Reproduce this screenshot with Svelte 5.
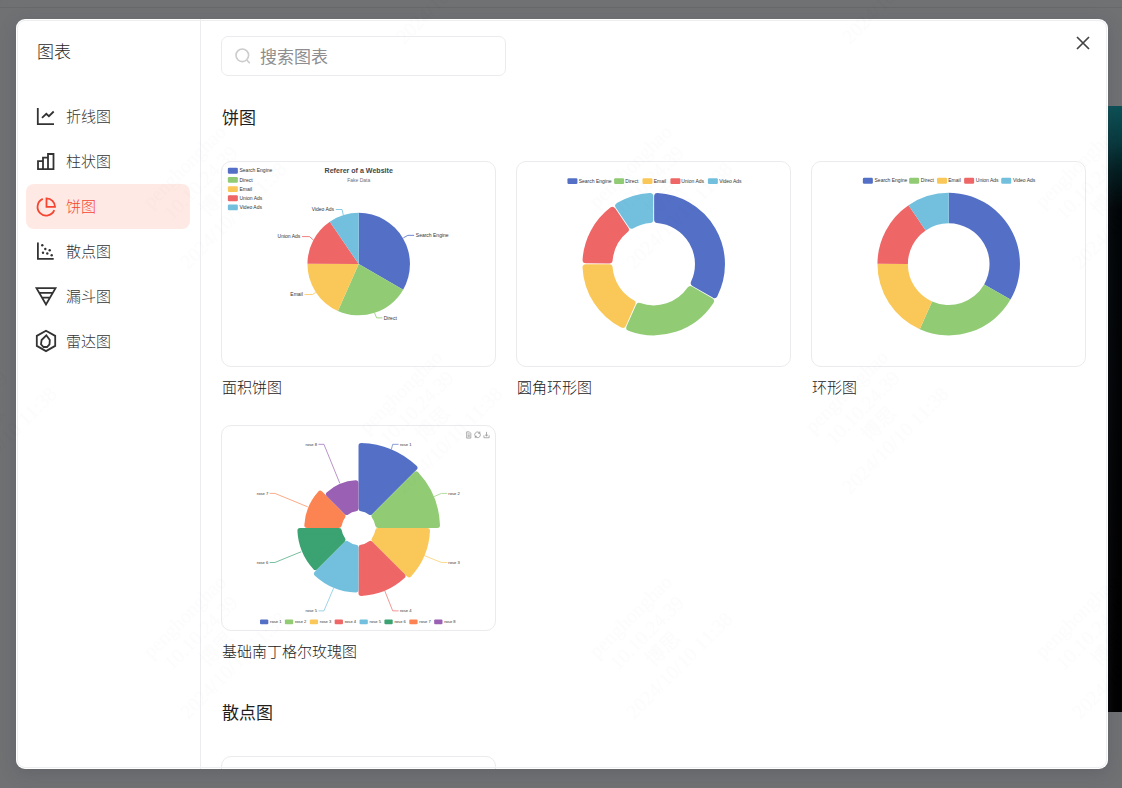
<script lang="ts">
  type Point = [number, number];
  type Label = { text: string; x: number; y: number; end?: boolean; line: string; color: string };
  type Legend = { text: string; x: number; y: number; tx: number; color: string };

  const palette = ['#5470c6', '#91cc75', '#fac858', '#ee6666', '#73c0de', '#3ba272', '#fc8452', '#9a60b4'];
  const sources = ['Search Engine', 'Direct', 'Email', 'Union Ads', 'Video Ads'];
  const visits = [1048, 735, 580, 484, 300];
  const roseRadii = [246, 236, 207, 197, 187, 177, 157, 138];

  const menu = [
    { id: 'line', name: '折线图' },
    { id: 'bar', name: '柱状图' },
    { id: 'pie', name: '饼图' },
    { id: 'scatter', name: '散点图' },
    { id: 'funnel', name: '漏斗图' },
    { id: 'radar', name: '雷达图' }
  ];

  let active = $state('pie');
  let keyword = $state('');
  let open = $state(true);

  // Sector outline. `pad` pulls every edge inwards; a round stroke of the same
  // colour fills part of it again, which leaves rounded corners.
  function sector(cx: number, cy: number, r: number, R: number, from: number, to: number, pad = 0) {
    const outer = R - pad;
    const inner = r > 0 ? r + pad : 0;
    const at = (radius: number, angle: number): Point => [
      cx + radius * Math.sin(angle),
      cy - radius * Math.cos(angle)
    ];
    const dOut = Math.asin(pad / outer);
    const dIn = inner > 0 ? Math.asin(pad / inner) : 0;
    const large = to - from > Math.PI ? 1 : 0;
    const p1 = at(outer, from + dOut);
    const p2 = at(outer, to - dOut);
    const p3 = at(inner, to - dIn);
    const p4 = at(inner, from + dIn);
    const back = inner > 0 ? `L${p3} A${inner},${inner} 0 ${large} 0 ${p4}` : `L${cx},${cy}`;
    return `M${p1} A${outer},${outer} 0 ${large} 1 ${p2} ${back}Z`;
  }

  function pieSlices(r: number, R: number, pad = 0) {
    const total = visits.reduce((a, b) => a + b, 0);
    let angle = 0;
    return visits.map((value, i) => {
      const from = angle;
      angle += (value / total) * Math.PI * 2;
      return { d: sector(328, 245, r, R, from, angle, pad), color: palette[i] };
    });
  }

  function rowLegend(xs: number[], texts: number[], y: number): Legend[] {
    return sources.map((text, i) => ({ text, x: xs[i], tx: texts[i], y, color: palette[i] }));
  }

  const pieLabels: Label[] = [
    { text: 'Search Engine', x: 465, y: 176, line: '435,182 446,176 461,176', color: palette[0] },
    { text: 'Direct', x: 388, y: 374, line: '366,362 371,374 385,374', color: palette[1] },
    { text: 'Email', x: 194, y: 318, end: true, line: '225,313 217,318 198,318', color: palette[2] },
    { text: 'Union Ads', x: 188, y: 179, end: true, line: '219,187 210,179 192,179', color: palette[3] },
    { text: 'Video Ads', x: 269, y: 114, end: true, line: '291,127 288,114 273,114', color: palette[4] }
  ];

  const roseLabels: Label[] = [
    { text: 'rose 1', x: 515, y: 53, line: '490,68 494,53 511,53', color: palette[0] },
    { text: 'rose 2', x: 655, y: 195, line: '612,205 635,195 652,195', color: palette[1] },
    { text: 'rose 3', x: 655, y: 395, line: '585,375 635,395 652,395', color: palette[2] },
    { text: 'rose 4', x: 515, y: 535, line: '471,477 494,535 511,535', color: palette[3] },
    { text: 'rose 5', x: 275, y: 535, end: true, line: '323,469 295,535 279,535', color: palette[4] },
    { text: 'rose 6', x: 134, y: 395, end: true, line: '229,364 153,395 138,395', color: palette[5] },
    { text: 'rose 7', x: 134, y: 195, end: true, line: '248,234 153,195 138,195', color: palette[6] },
    { text: 'rose 8', x: 275, y: 53, end: true, line: '341,166 295,53 279,53', color: palette[7] }
  ];

  const charts = [
    {
      name: '面积饼图',
      viewBox: '0 0 655 490',
      title: true,
      slices: pieSlices(0, 123),
      round: 0,
      legend: sources.map((text, i): Legend => ({ text, x: 14, tx: 42, y: 21 + i * 22, color: palette[i] })),
      labels: pieLabels
    },
    {
      name: '圆角环形图',
      viewBox: '0 0 655 490',
      slices: pieSlices(98, 172, 9),
      round: 16,
      legend: rowLegend([121, 233, 301, 368, 458], [148, 260, 328, 394, 485], 46),
      labels: []
    },
    {
      name: '环形图',
      viewBox: '0 0 655 490',
      slices: pieSlices(98, 171),
      round: 0,
      legend: rowLegend([122, 233, 300, 365, 454], [150, 261, 327, 393, 482], 45),
      labels: []
    },
    {
      name: '基础南丁格尔玫瑰图',
      viewBox: '0 0 790 590',
      toolbox: true,
      slices: roseRadii.map((R, i) => ({
        d: sector(395, 295, 49, R, (i * Math.PI) / 4, ((i + 1) * Math.PI) / 4, 8),
        color: palette[i]
      })),
      round: 16,
      legend: palette.map((color, i): Legend => ({ text: `rose ${i + 1}`, x: 110 + i * 72, tx: 139 + i * 72, y: 567, color })),
      labels: roseLabels
    }
  ];
</script>

<div class="page">
  <div class="scene" aria-hidden="true">
    <div class="scene-bar"></div>
    <div class="scene-tools"></div>
    <div class="scene-canvas"></div>
  </div>

  {#if open}
    <div class="modal" role="dialog" aria-modal="true" aria-label="图表">
      <aside class="sidebar">
        <h1>图表</h1>
        <nav>
          {#each menu as item}
            <button class="menu-item" class:active={active === item.id} onclick={() => (active = item.id)}>
              <svg class="menu-icon" viewBox="0 0 20 20" aria-hidden="true">
                {#if item.id === 'line'}
                  <path d="M1.8 1v16.2H18M6 10.8l4.3-4 2.6 2.4 4.8-4.7" />
                {:else if item.id === 'bar'}
                  <path d="M2 9.2h5v8H2zM7 5.7h5v11.5H7zM12 2h5.5v15.2H12z" />
                {:else if item.id === 'pie'}
                  <path d="M6.8 1.9A8.700 8.700 0 1 0 18.300 13.200M10.500 1.300v8.500H19A8.500 8.500 0 0 0 10.500 1.300z" />
                {:else if item.id === 'scatter'}
                  <path d="M1.9.5v16.400h15.800" />
                  <g class="dots">
                    <circle cx="6.3" cy="3.2" r="1.2" />
                    <circle cx="9.3" cy="7" r="1.2" />
                    <circle cx="13.7" cy="8.3" r="1.2" />
                    <circle cx="7" cy="10.8" r="1.2" />
                    <circle cx="11.3" cy="11.5" r="1.2" />
                    <circle cx="15.7" cy="13.2" r="1.2" />
                  </g>
                {:else if item.id === 'funnel'}
                  <path d="M.5 1.2h19L10 17.5zM3 5.8h14M5.800 10.700h8.400" />
                {:else}
                  <path d="M10-1.300l9.200 5.200v10L10 19.100.8 13.900v-10z" />
                  <path d="M10.300 3.300l3.500 4.700-.3 4.300-2.500 2.700H7.500l-2.500-2.700.6-4.300z" />
                {/if}
              </svg>
              <span>{item.name}</span>
            </button>
          {/each}
        </nav>
      </aside>

      <main>
        <div class="search">
          <svg viewBox="0 0 16 16" aria-hidden="true">
            <circle cx="7.3" cy="7.3" r="6.3" />
            <path d="M12 12.2l2.8 3" />
          </svg>
          <input type="text" placeholder="搜索图表" aria-label="搜索图表" bind:value={keyword} />
        </div>

        <section>
          <h2>饼图</h2>
          <div class="grid">
            {#each charts as chart}
              <figure>
                <div class="card">
                  <svg viewBox={chart.viewBox} aria-label={chart.name} role="img">
                    {#each chart.slices as slice}
                      <path
                        d={slice.d}
                        fill={slice.color}
                        stroke={slice.color}
                        stroke-width={chart.round}
                        stroke-linejoin="round"
                      />
                    {/each}
                    {#if chart.title}
                      <text class="chart-title" x="328" y="27">Referer of a Website</text>
                      <text class="chart-subtitle" x="328" y="49">Fake Data</text>
                    {/if}
                    {#each chart.labels as label}
                      <polyline points={label.line} fill="none" stroke={label.color} stroke-width="2" />
                      <text x={label.x} y={label.y + 4} text-anchor={label.end ? 'end' : 'start'}>{label.text}</text>
                    {/each}
                    {#each chart.legend as entry}
                      <rect x={entry.x} y={entry.y - 7} width="24" height="14" rx="3" fill={entry.color} />
                      <text x={entry.tx} y={entry.y + 4}>{entry.text}</text>
                    {/each}
                    {#if chart.toolbox}
                      <g class="toolbox">
                        <path d="M708 17h8l4 4v14h-12zM711 23h6M711 27h6M711 31h6" />
                        <path d="M733 30a8 8 0 0 1 10-12l3 3M746 16v5h-5M746 21a8 8 0 0 1-10 12l-3-3M733 35v-5h5" />
                        <path d="M758 27v7h15v-7M765.5 17v12M761 25l4.5 4 4.500-4" />
                      </g>
                    {/if}
                  </svg>
                </div>
                <figcaption>{chart.name}</figcaption>
              </figure>
            {/each}
          </div>
        </section>

        <section>
          <h2>散点图</h2>
          <div class="grid">
            <div class="card"><svg viewBox="0 0 655 490" aria-hidden="true"></svg></div>
          </div>
        </section>
      </main>

      <button class="close" aria-label="关闭" onclick={() => (open = false)}>
        <svg viewBox="0 0 14 14" aria-hidden="true"><path d="M1 1l12 12M13 1L1 13" /></svg>
      </button>
    </div>
  {/if}

  <svg class="watermark" aria-hidden="true">
    <defs>
      <pattern id="stamp" x="89" y="71" width="446" height="450" patternUnits="userSpaceOnUse">
        {#each [[120, 120], [336, 345]] as [x, y]}
          <g transform="translate({x} {y}) rotate(-45)">
            <text y="-28">penghonghao</text>
            <text y="-5">10.10.24.39</text>
            <text y="18">博思</text>
            <text y="41">2024/10/10 11:38</text>
          </g>
        {/each}
      </pattern>
    </defs>
    <rect width="100%" height="100%" fill="url(#stamp)" />
  </svg>
</div>

<style>
  :global(body) {
    font-family: 'Noto Sans CJK SC', 'Liberation Sans', sans-serif;
  }

  .page {
    position: relative;
    box-sizing: border-box;
    height: 100vh;
    padding: 19px 14px 19px 16px;
    overflow: hidden;
    background: #707173;
  }

  .scene {
    position: absolute;
    inset: 0;
    display: flex;
    flex-direction: column;
  }

  .scene-bar {
    height: 7px;
    border-bottom: 1px solid #68696b;
  }

  .scene-tools {
    height: 98px;
  }

  .scene-canvas {
    flex: 1;
    margin-bottom: 76px;
    background: linear-gradient(#0b5156 0%, #07393e 6%, #031c1f 11%, #020507 17%, #000 100%);
    clip-path: inset(0 0 0 50%);
  }

  .modal {
    position: relative;
    display: flex;
    height: 100%;
    border-radius: 9px;
    overflow: hidden;
    background: #fff;
    outline: 1px solid #eceef0;
    outline-offset: -2px;
    box-shadow: 0 4px 16px rgba(60, 64, 80, 0.25);
  }

  .sidebar {
    flex: none;
    box-sizing: border-box;
    width: 185px;
    padding: 20px 10px;
    border-right: 1px solid #ececee;
  }

  h1,
  h2 {
    margin: 0;
    font-size: 17px;
    line-height: 24px;
    font-weight: 400;
    color: #1f1f1f;
  }

  h1 {
    padding-left: 11px;
    margin-bottom: 31px;
    font-weight: 300;
  }

  nav {
    display: flex;
    flex-direction: column;
  }

  .menu-item {
    display: flex;
    align-items: center;
    gap: 10px;
    height: 45px;
    padding: 0 10px;
    border: 0;
    border-radius: 8px;
    background: none;
    font: inherit;
    font-size: 15px;
    font-weight: 300;
    color: #333;
    cursor: pointer;
  }

  .menu-item span {
    padding-bottom: 2px;
  }

  .menu-item.active {
    background: #ffe9e4;
    color: #f54531;
  }

  .menu-icon {
    width: 20px;
    height: 20px;
    overflow: visible;
    fill: none;
    stroke: currentColor;
    stroke-width: 1.8;
  }

  .dots {
    fill: currentColor;
    stroke: none;
  }

  main {
    flex: 1;
    min-width: 0;
    padding: 17px 22px 0 20px;
    overflow: hidden;
  }

  .search {
    display: flex;
    align-items: center;
    gap: 9px;
    box-sizing: border-box;
    width: 285px;
    height: 40px;
    margin-bottom: 29px;
    padding: 0 13px;
    border: 1px solid #ebebed;
    border-radius: 7px;
  }

  .search svg {
    flex: none;
    width: 16px;
    height: 16px;
    fill: none;
    stroke: #ccc;
    stroke-width: 1.6;
  }

  .search input {
    flex: 1;
    min-width: 0;
    padding: 0 0 2px;
    border: 0;
    outline: 0;
    background: none;
    font: inherit;
    font-size: 17px;
    color: #333;
  }

  .search input::placeholder {
    color: #8e8e90;
  }

  section {
    margin-bottom: 37px;
  }

  h2 {
    padding-left: 1px;
    margin-bottom: 32px;
  }

  .grid {
    display: grid;
    grid-template-columns: repeat(3, minmax(0, 1fr));
    gap: 28px 20px;
  }

  .grid:not(:last-child) {
    margin-bottom: 2px;
  }

  figure {
    margin: 0;
  }

  .card {
    border: 1px solid #ebebed;
    border-radius: 10px;
    overflow: hidden;
  }

  .card svg {
    display: block;
    width: 100%;
    font-family: 'Liberation Sans', Arial, sans-serif;
    font-size: 12px;
    fill: #333;
  }

  .card .chart-title {
    font-size: 17px;
    font-weight: 700;
    fill: #464646;
    text-anchor: middle;
  }

  .card .chart-subtitle {
    fill: #6e7079;
    text-anchor: middle;
  }

  .toolbox {
    fill: none;
    stroke: #888;
    stroke-width: 2;
  }

  figcaption {
    padding-left: 1px;
    margin-top: 10px;
    font-size: 15px;
    line-height: 20px;
    font-weight: 300;
    color: #222;
  }

  section + section {
    padding-top: 2px;
  }

  .close {
    position: absolute;
    top: 11px;
    right: 12px;
    display: flex;
    align-items: center;
    justify-content: center;
    width: 26px;
    height: 26px;
    padding: 0;
    border: 0;
    background: none;
    cursor: pointer;
  }

  .close svg {
    width: 14px;
    height: 14px;
    fill: none;
    stroke: #444;
    stroke-width: 1.7;
  }

  .watermark {
    position: absolute;
    inset: 0;
    width: 100%;
    height: 100%;
    pointer-events: none;
    opacity: 0.009;
    font-family: 'Liberation Serif', 'Noto Sans CJK SC', serif;
    font-size: 20px;
    text-anchor: middle;
  }
</style>
